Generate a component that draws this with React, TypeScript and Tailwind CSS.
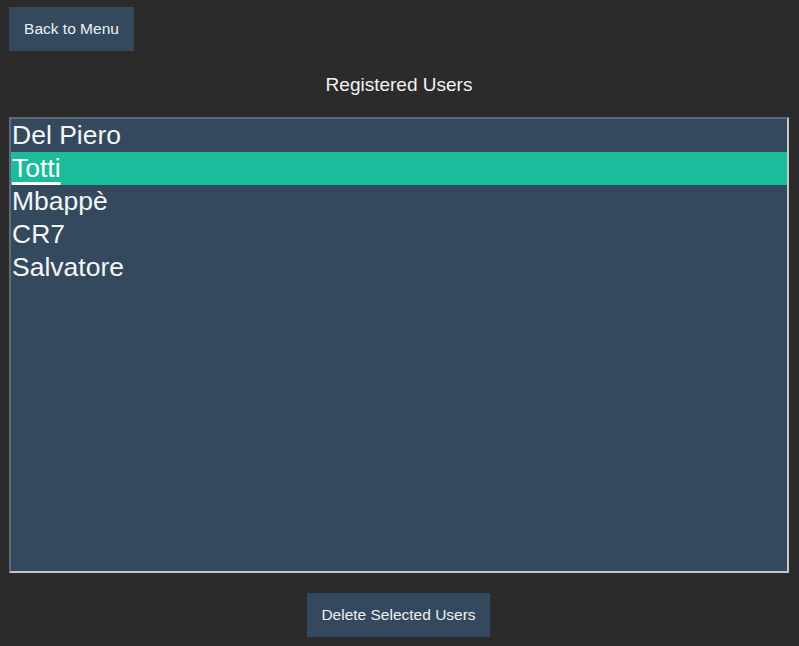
import React from "react";

const users = ["Del Piero", "Totti", "Mbappè", "CR7", "Salvatore"];

export default function App() {
  return (
    <div
      className="w-[799px] h-[646px] bg-[#2b2b2b] text-white flex flex-col px-[9px] pt-[7px]"
      style={{ fontFamily: '"Liberation Sans", Arial, sans-serif' }}
    >
      <div className="flex">
        <button className="h-[44px] w-[125px] bg-[#34495e] text-[#ecf0f1] text-[15.5px] flex items-center justify-center">
          Back to Menu
        </button>
      </div>
      <div className="mt-[23px] w-[780px] h-[22px] leading-[22px] text-center text-[19px] text-[#f2f2f2]">
        Registered Users
      </div>
      <div className="mt-[21px] h-[456px] w-[780px] bg-[#34495e] border-2 border-t-[#5d6b79] border-l-[#5d6b79] border-r-[#c4c8cc] border-b-[#c4c8cc] flex flex-col">
        {users.map((u, i) => (
          <div
            key={u}
            className={
              "h-[33px] leading-[33px] text-[26.5px] pl-[1px] " +
              (i === 1 ? "bg-[#1abc9c] text-white" : "text-[#f4f6f7]")
            }
          >
            <span className={i === 1 ? "underline decoration-[3px] underline-offset-[5px]" : ""}>{u}</span>
          </div>
        ))}
      </div>
      <div className="mt-[20px] flex pl-[298px]">
        <button className="h-[44px] w-[183px] bg-[#34495e] text-[#ecf0f1] text-[15.5px] flex items-center justify-center">
          Delete Selected Users
        </button>
      </div>
    </div>
  );
}
